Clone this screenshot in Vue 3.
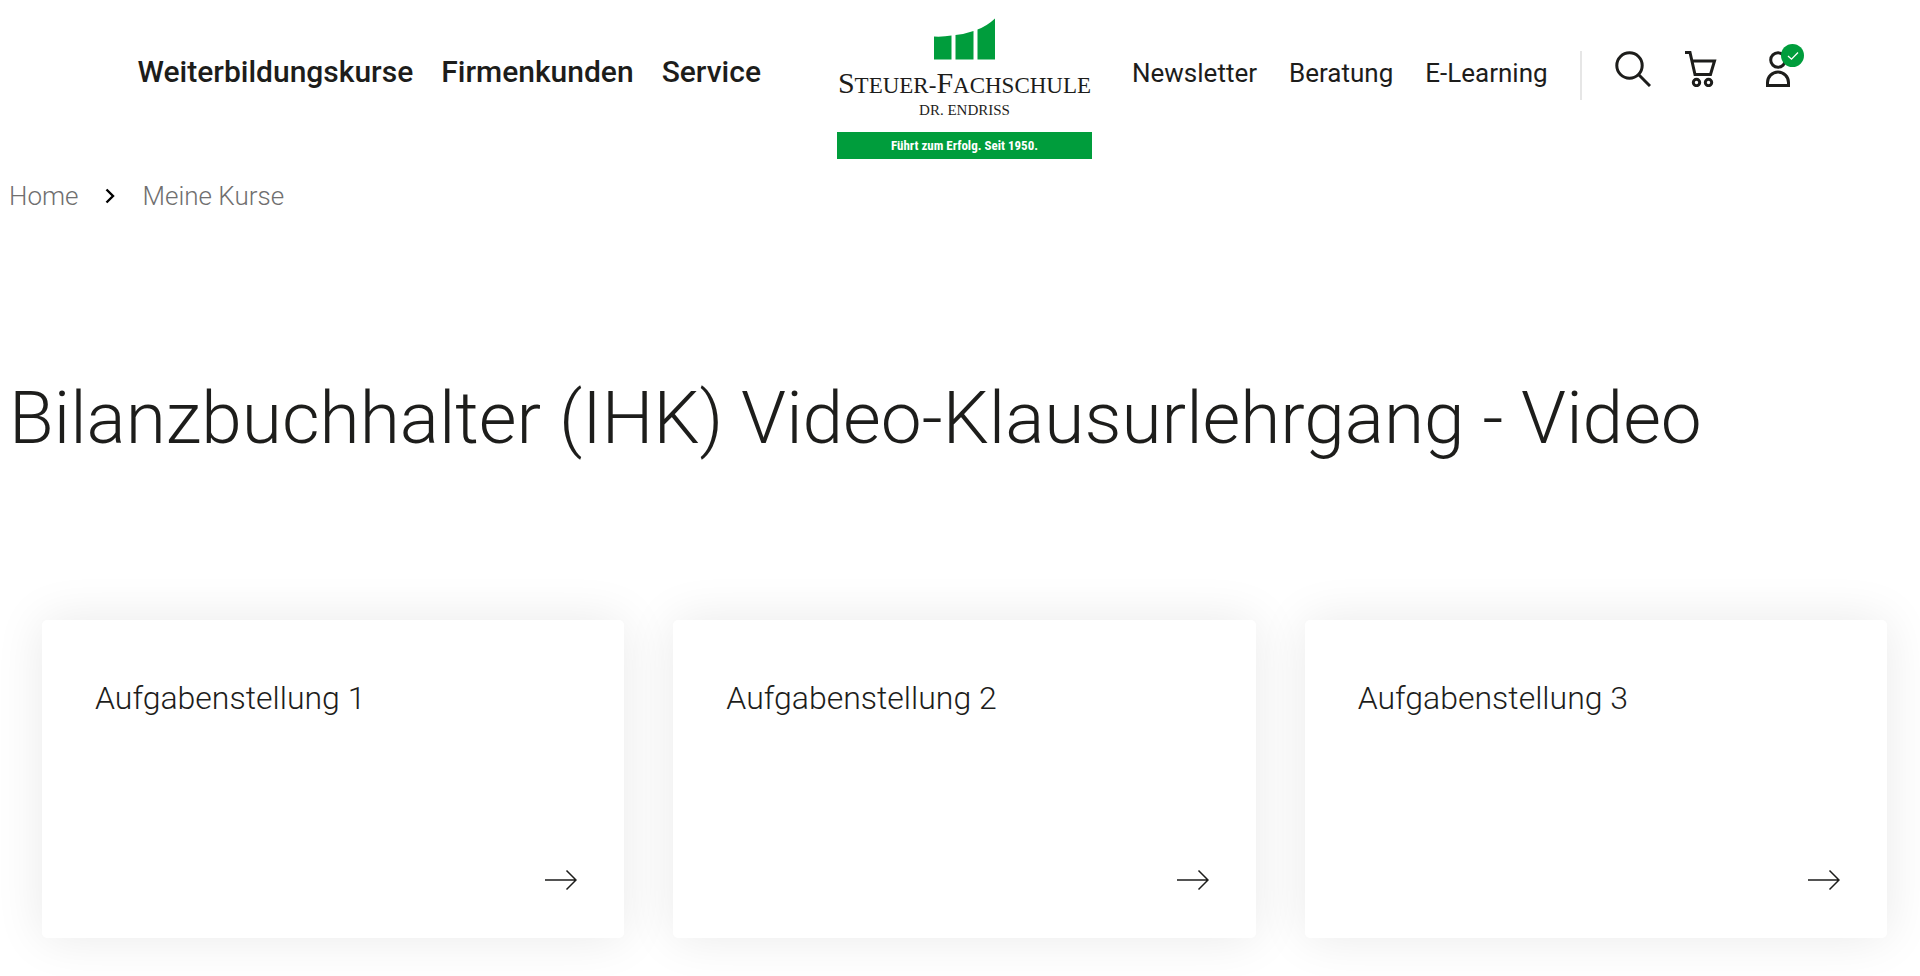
<template>
  <div class="page">
    <header class="header">
      <nav class="nav nav-main" aria-label="Hauptnavigation">
        <a v-for="item in mainNav" :key="item" href="#">{{ item }}</a>
      </nav>

      <a class="logo" href="#">
        <svg class="logo-bars" viewBox="0 0 62 42" aria-hidden="true">
          <path d="M0 18.500Q9 19 17.500 17.500V41.500H0Z" />
          <path d="M21.500 17Q31 16 39.500 13V41.500H21.500Z" />
          <path d="M43.500 11.500Q53 8 61 0.500V41.500H43.500Z" />
        </svg>
        <span class="logo-name"><b>S</b>TEUER-<b>F</b>ACHSCHULE</span>
        <span class="logo-sub">DR. ENDRISS</span>
        <span class="logo-claim">Führt zum Erfolg. Seit 1950.</span>
      </a>

      <div class="header-right">
        <nav class="nav nav-meta" aria-label="Service">
          <a v-for="item in metaNav" :key="item" href="#">{{ item }}</a>
        </nav>
        <div class="actions">
          <button type="button" aria-label="Suche">
            <svg viewBox="0 0 36 36">
              <circle cx="14.500" cy="14.500" r="12.700" />
              <path d="M23.500 23.500L35 35" />
            </svg>
          </button>
          <a href="#" aria-label="Warenkorb">
            <svg viewBox="0 0 36 36">
              <path d="M1 1.500H6L11 23.500H26.500L30.500 10H8" />
              <circle cx="12.500" cy="31.500" r="3.200" />
              <circle cx="24.500" cy="31.500" r="3.200" />
            </svg>
          </a>
          <a class="account" href="#" aria-label="Mein Konto">
            <svg viewBox="0 0 36 36">
              <circle cx="13" cy="9" r="7.300" />
              <path d="M2.500 34.500V31.500A10.500 10.500 0 0 1 23.500 31.500V34.500Z" />
            </svg>
            <span class="badge">
              <svg viewBox="0 0 23 23"><path d="M7 12L10.500 15.200L17 8.500" /></svg>
            </span>
          </a>
        </div>
      </div>
    </header>

    <main>
      <nav class="breadcrumb" aria-label="Breadcrumb">
        <a href="#">Home</a>
        <svg viewBox="0 0 10 16" aria-hidden="true"><path d="M1.500 1.500L8 8L1.500 14.500" /></svg>
        <a href="#">Meine Kurse</a>
      </nav>

      <h1>Bilanzbuchhalter (IHK) Video-Klausurlehrgang - Video</h1>

      <div class="cards">
        <a v-for="n in 3" :key="n" class="card" href="#">
          <h2>Aufgabenstellung {{ n }}</h2>
          <svg viewBox="0 0 32 22" aria-hidden="true"><path d="M0 11H31M21.500 1.500L31 11L21.500 20.500" /></svg>
        </a>
      </div>
    </main>
  </div>
</template>

<script setup>
const mainNav = ['Weiterbildungskurse', 'Firmenkunden', 'Service']
const metaNav = ['Newsletter', 'Beratung', 'E-Learning']
</script>

<style>
body {
  margin: 0;
  background: #fff;
}
</style>

<style scoped>
.page {
  padding: 0 0 38px 9px;
  font-family: Roboto, "Liberation Sans", sans-serif;
  color: #1d1d1b;
  overflow: hidden;
}
a {
  color: inherit;
  text-decoration: none;
}
svg {
  display: block;
  fill: none;
  stroke: currentColor;
}
.header {
  display: grid;
  grid-template-columns: 1fr 255px 1fr;
  align-items: start;
  height: 178px;
}
.nav {
  display: flex;
  line-height: 40px;
  white-space: nowrap;
}
.nav-main {
  justify-content: flex-end;
  gap: 28px;
  padding: 52px 76px 0 0;
  font-size: 30px;
  font-weight: 500;
}
.nav-meta {
  gap: 32px;
  padding-top: 2px;
  font-size: 26px;
}
.logo {
  display: flex;
  flex-direction: column;
  align-items: center;
  padding-top: 18px;
  font-family: "Liberation Serif", serif;
  white-space: nowrap;
}
.logo-bars {
  width: 62px;
  height: 42px;
  fill: #009d3c;
  stroke: none;
}
.logo-name {
  margin-top: 7px;
  font-size: 23px;
  line-height: 32px;
}
.logo-name b {
  font-size: 30px;
  font-weight: 400;
}
.logo-sub {
  font-size: 15px;
  line-height: 16px;
}
.logo-claim {
  align-self: stretch;
  margin-top: 14px;
  background: #009d3c;
  color: #fff;
  font-family: "Roboto Condensed", Roboto, sans-serif;
  font-size: 13px;
  font-weight: 700;
  line-height: 27px;
  text-align: center;
}
.header-right {
  display: flex;
  align-items: flex-start;
  padding: 51px 0 0 40px;
}
.actions {
  display: flex;
  gap: 33px;
  height: 49px;
  margin-left: 32px;
  padding-left: 33px;
  border-left: 2px solid #e6e6e6;
}
.actions > * {
  position: relative;
  flex: none;
  width: 36px;
  height: 36px;
  padding: 0;
  border: 0;
  background: none;
  color: inherit;
  cursor: pointer;
}
.actions svg {
  width: 36px;
  height: 36px;
  stroke-width: 3;
}
.actions .account {
  margin-left: 12px;
}
.badge {
  position: absolute;
  top: -7px;
  right: -3px;
  width: 23px;
  height: 23px;
  border-radius: 50%;
  background: #009d3c;
  color: #fff;
}
.actions .badge svg {
  width: 23px;
  height: 23px;
  stroke-width: 1.300;
}
.breadcrumb {
  display: flex;
  align-items: center;
  gap: 27px;
  font-size: 26px;
  font-weight: 300;
  line-height: 36px;
  color: #706f6f;
}
.breadcrumb svg {
  width: 10px;
  height: 16px;
  stroke: #000;
  stroke-width: 2.400;
}
h1 {
  margin: 159px 0 0;
  font-size: 73px;
  font-weight: 300;
  line-height: 90px;
}
.cards {
  display: grid;
  grid-template-columns: repeat(3, 1fr);
  gap: 49px;
  margin: 157px 33px 0;
}
.card {
  display: flex;
  flex-direction: column;
  justify-content: space-between;
  box-sizing: border-box;
  min-height: 318px;
  padding: 58px 47px 47px 53px;
  border-radius: 5px;
  background: #fff;
  box-shadow: 0 0 50px rgba(0, 0, 0, 0.09);
}
.card h2 {
  margin: 0;
  font-size: 32px;
  font-weight: 300;
  line-height: 40px;
}
.card svg {
  align-self: flex-end;
  width: 32px;
  height: 22px;
  stroke-width: 1.500;
}
</style>
